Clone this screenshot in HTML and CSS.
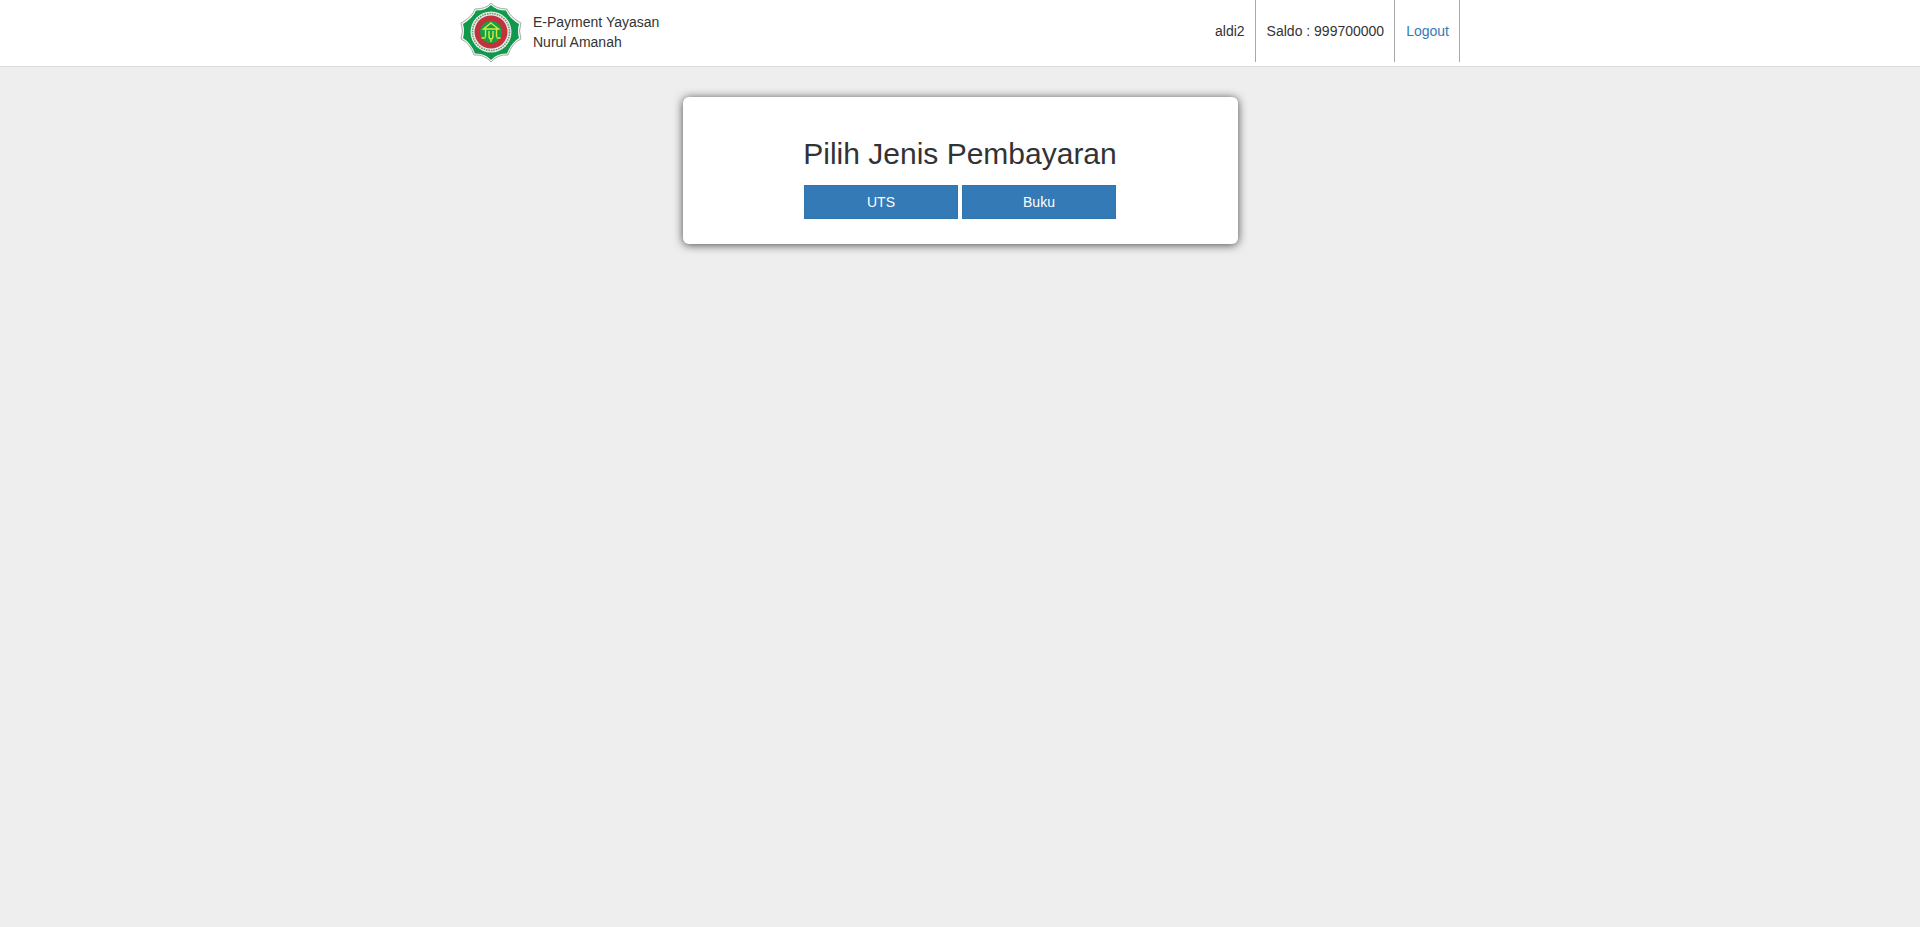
FILE: index.html
```html
<!DOCTYPE html>
<html lang="en">
<head>
  <meta charset="UTF-8" />
  <meta name="viewport" content="width=device-width, initial-scale=1.0"/>
  <title>E-Payment Yayasan Nurul Amanah</title>
  <link rel="stylesheet" href="styles.css">
</head>
<body>
  <!-- Navbar -->
  <header class="navbar">
    <div class="navbar-inner">
      <a class="brand" href="#">
        <svg class="brand-logo" viewBox="0 0 62 60" aria-hidden="true">
          <path d="M31 0 Q36 6 47 6 Q50 14 61 20 Q58 28 61 36 Q52 40 48 52 Q38 51 31 59 Q24 51 14 52 Q10 40 1 36 Q4 28 1 20 Q12 14 15 6 Q26 6 31 0 Z" fill="#f4f7f4" stroke="#9fb0a4" stroke-width="1"/>
          <path d="M31 2 Q36 7.500 46 7.500 Q49 15 59 21 Q57 28 59 35 Q51 40 47 50.500 Q37 50 31 57 Q25 50 15 50.500 Q11 40 3 35 Q5 28 3 21 Q13 15 16 7.500 Q26 7.500 31 2 Z" fill="#10984c"/>
          <circle cx="31" cy="29" r="20.500" fill="#e6efe4"/>
          <circle cx="31" cy="29" r="18.500" fill="none" stroke="#6c8f78" stroke-width="1.500" stroke-dasharray="1.500 1"/>
          <circle cx="31" cy="29" r="16.500" fill="#c2323c"/>
          <circle cx="31" cy="29" r="11" fill="#14a044"/>
          <path d="M31 20 L38.500 26 L23.500 26 Z M25.500 26 V34 M36.500 26 V34 M29 28 V33 C29 35 30 36 31 36 V39 M33 28 V33 C33 35 32 36 31 36 M21.500 35 H25.500 M36.500 35 H40.500" fill="none" stroke="#d6ea3e" stroke-width="1.400"/>
        </svg>
        <span class="brand-name">E-Payment Yayasan<br>Nurul Amanah</span>
      </a>
      <ul class="nav-list">
        <li class="nav-item">aldi2</li>
        <li class="nav-item">Saldo : 999700000</li>
        <li class="nav-item"><a href="#">Logout</a></li>
      </ul>
    </div>
  </header>

  <!-- Pilihan pembayaran -->
  <main class="content">
    <section class="card">
      <div class="card-body">
        <h2 class="card-title">Pilih Jenis Pembayaran</h2>
        <div class="btn-row">
          <a class="btn" href="#">UTS</a>
          <a class="btn" href="#">Buku</a>
        </div>
      </div>
    </section>
  </main>
</body>
</html>
```

FILE: styles.css
```css
* {
  box-sizing: border-box;
}
html, body {
  height: 100%;
}
body {
  margin: 0;
  font-family: "Liberation Sans", Arial, sans-serif;
  font-size: 14px;
  line-height: 20px;
  color: #333;
  background-color: #eee;
}
a {
  color: #337ab7;
  text-decoration: none;
}
.navbar {
  height: 67px;
  background: #fff;
  border-bottom: 1px solid #dcdcdc;
}
.navbar-inner {
  width: 1000px;
  margin: 0 auto;
  display: flex;
  justify-content: space-between;
}
.brand {
  display: flex;
  align-items: center;
  gap: 11px;
  height: 66px;
  color: #333;
}
.brand-logo {
  width: 62px;
  height: 60px;
}
.brand-name {
  padding-bottom: 2px;
}
.nav-list {
  display: flex;
  margin: 0;
  padding: 0;
  list-style: none;
}
.nav-item {
  height: 62px;
  padding: 21px 10px 0 11px;
  border-right: 1px solid #aaa;
}
.content {
  display: flex;
  justify-content: center;
  padding-top: 30px;
}
.card {
  width: 555px;
  height: 147px;
  background: #fff;
  border-radius: 6px;
  box-shadow: 0 1px 10px rgba(0, 0, 0, 0.7);
}
.card-body {
  width: fit-content;
  margin: 0 auto;
  padding-top: 40px;
}
.card-title {
  margin: 0 0 15px;
  font-size: 30px;
  font-weight: 400;
  line-height: 33px;
  white-space: nowrap;
}
.btn-row {
  display: flex;
  gap: 4px;
  width: 312px;
  margin: 0 auto;
}
.btn {
  flex: 1;
  height: 34px;
  line-height: 32px;
  text-align: center;
  color: #fff;
  background-color: #337ab7;
  border: 1px solid #3174ae;
}
```
